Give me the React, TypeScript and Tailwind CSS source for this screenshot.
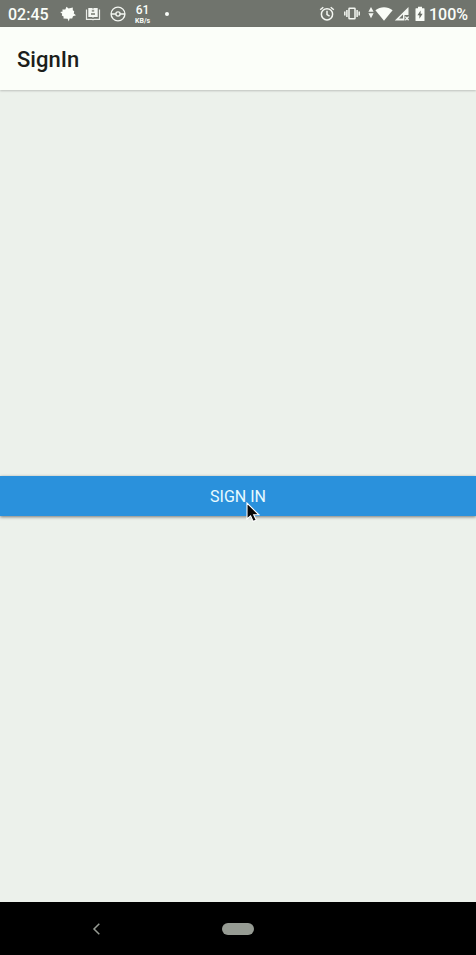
import React from "react";

function LeafIcon() {
  return (
    <svg width="16" height="16" viewBox="0 0 16 16" fill="#fafdf8" aria-hidden="true">
      <path d="M6.500.8 8.600 2.600 12.800 1.500 12.800 4.200 14.200 5.200 13.800 7.400 16 9.200 13 10.300 12.200 12.500 9.600 12.600 8.800 15.400 7.600 12.800 3.500 12.400 3.600 10.500 1.800 9.600 2.200 7.800.2 6 2.600 5.500 2.400 3.400 5.300 3.600Z" />
    </svg>
  );
}

function BookIcon() {
  return (
    <svg width="16" height="14" viewBox="0 0 16 14" aria-hidden="true">
      <path d="M3.300 1H7l1 .8 1-.8h3.700v9H9l-1 .8-1-.8H3.300Z" fill="#f4f7f2" />
      <path d="M1.500 2.500v9.800h5.500l1 .5 1-.5h5.500V2.500" fill="none" stroke="#e9ece7" strokeWidth="1.200" />
      <path d="M6.800 2.800h2.400v2H6.800ZM6 6h4v2H6Z" fill="#94988f" />
    </svg>
  );
}

function BallIcon() {
  return (
    <svg width="16" height="16" viewBox="0 0 16 16" fill="none" stroke="#f4f7f2" strokeWidth="1.4" aria-hidden="true">
      <circle cx="8" cy="8" r="6.9" />
      <circle cx="8" cy="8" r="2.1" />
      <path d="M1 8h4.900M10.100 8H15" />
    </svg>
  );
}

function AlarmIcon() {
  return (
    <svg width="16" height="16" viewBox="0 0 16 16" fill="none" stroke="#f4f7f2" strokeWidth="1.500" aria-hidden="true">
      <circle cx="8" cy="8.300" r="5.600" />
      <path d="M8 4.800V8.600l2.600 1.600M1.200 3.800 4.300 1.200M14.800 3.800l-3.100-2.600" />
    </svg>
  );
}

function VibrateIcon() {
  return (
    <svg width="16" height="14" viewBox="0 0 16 14" fill="none" stroke="#f4f7f2" strokeWidth="1.500" aria-hidden="true">
      <rect x="5" y="1.300" width="6" height="10.400" rx=".5" />
      <path d="M2.900 3v7M13.100 3v7M.8 4.500v4M15.200 4.500v4" />
    </svg>
  );
}

function TrafficIcon() {
  return (
    <svg width="6" height="14" viewBox="0 0 6 14" fill="#f4f7f2" aria-hidden="true">
      <path d="m3 0 2.600 4.800H.4ZM.4 6.300h5.200L3 11.200Z" />
    </svg>
  );
}

function WifiIcon() {
  return (
    <svg width="18" height="14" viewBox="0 0 18 14" fill="#fafdf8" aria-hidden="true">
      <path d="M.4 3.300C5.500-.9 12.500-.9 17.600 3.300L9 13.800Z" />
    </svg>
  );
}

function SignalIcon() {
  return (
    <svg width="16" height="14" viewBox="0 0 16 14" aria-hidden="true">
      <path d="M14.500 0v8h-4v5.500H.8Z" fill="#f4f7f2" />
      <path d="m5 11.500 4-4v4Z" fill="#70746d" />
      <path d="m11.300 9.600 3.300 3.600m0-3.600-3.300 3.600" stroke="#f4f7f2" strokeWidth="1.300" />
    </svg>
  );
}

function BatteryIcon() {
  return (
    <svg width="10" height="16" viewBox="0 0 10 16" aria-hidden="true">
      <path d="M3 .8h4v1.500h2q.5 0 .5.5v11.700q0 .500-.5.500H1q-.5 0-.5-.5V2.800q0-.5.5-.5h2Z" fill="#fafdf8" />
      <path d="M5.600 4.500 2.400 9.300h2v3.400l3.200-4.900h-2Z" fill="#666a63" />
    </svg>
  );
}

function StatusBar() {
  return (
    <div className="flex h-[27px] items-center justify-between bg-[#70746d] px-2 pt-px text-base font-medium text-[#fafdf8]">
      <div className="flex items-center">
        <span className="w-[52px] pt-px">02:45</span>
        <div className="flex items-center gap-[9px]">
          <LeafIcon />
          <BookIcon />
          <BallIcon />
          <div className="flex flex-col items-center">
            <span className="text-xs leading-[14px]">61</span>
            <span className="text-[7px] leading-[8px] font-bold">KB/s</span>
          </div>
        </div>
        <span className="ml-[15px] size-1 rounded-full bg-[#fafdf8]" />
      </div>
      <div className="flex items-center">
        <div className="flex items-center gap-[9px]">
          <AlarmIcon />
          <VibrateIcon />
        </div>
        <div className="ml-2 flex items-center gap-px">
          <TrafficIcon />
          <WifiIcon />
          <SignalIcon />
        </div>
        <div className="ml-[5px] flex items-center gap-1">
          <BatteryIcon />
          <span className="pt-px">100%</span>
        </div>
      </div>
    </div>
  );
}

function Pointer() {
  return (
    <svg className="absolute top-[26px] left-1/2 ml-2" width="14" height="22" viewBox="0 0 14 22" aria-hidden="true">
      <path d="M1 1v16l3.600-3.200 2.600 5.600 3-1.400-2.500-5.200h5.200Z" fill="#080808" stroke="#fff" strokeWidth="1.100" />
    </svg>
  );
}

export default function App() {
  return (
    <div className="flex min-h-screen flex-col bg-[#ecf1eb] font-[Roboto,sans-serif]">
      <StatusBar />
      <header className="z-10 flex h-[63px] items-center bg-[#fbfef9] px-[17px] pt-[2px] shadow-[0_1px_2px_rgba(0,0,0,0.2)]">
        <h1 className="text-[22px] leading-7 font-medium text-[#1c1e1b]">SignIn</h1>
      </header>
      <main className="flex flex-1 flex-col justify-center">
        <div className="relative">
          <button
            type="button"
            className="block h-10 w-full bg-[#2a91dc] pt-px text-base text-[#e8fbff] shadow-[0_1px_3px_rgba(0,0,0,0.5)]"
          >
            SIGN IN
          </button>
          <Pointer />
        </div>
      </main>
      <nav className="grid h-[53px] grid-cols-[1fr_auto_1fr] items-center bg-black" aria-label="System navigation">
        <button type="button" aria-label="Back" className="ml-[91px] w-3">
          <svg width="12" height="14" viewBox="0 0 12 14" fill="none" stroke="#969b93" strokeWidth="1.500" aria-hidden="true">
            <path d="M8.300 1.800 3 7l5.300 5.200" />
          </svg>
        </button>
        <button type="button" aria-label="Home" className="h-3 w-8 rounded-full bg-[#969b93]" />
      </nav>
    </div>
  );
}
